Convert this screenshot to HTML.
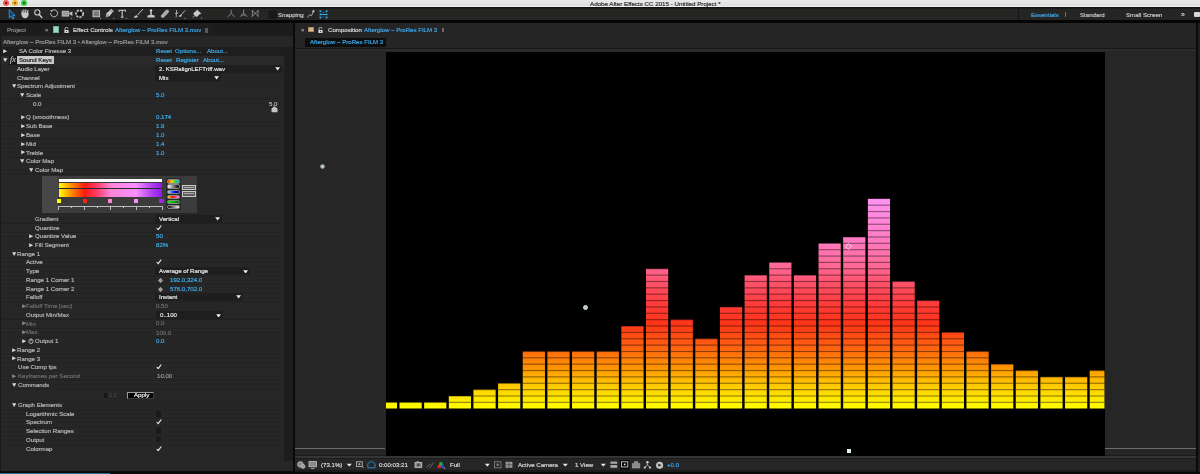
<!DOCTYPE html>
<html><head><meta charset="utf-8"><style>
html,body{margin:0;padding:0;}
body{width:1200px;height:474px;overflow:hidden;background:#1b1b1b;position:relative;font-family:"Liberation Sans", sans-serif;}
#r>div{position:absolute;}
.t{white-space:nowrap;-webkit-font-smoothing:antialiased;will-change:transform;-webkit-text-stroke:0.18px currentColor;}
svg{position:absolute;}
</style></head><body><div id="r">
<div style="left:0px;top:0px;width:1200px;height:7.3px;background:linear-gradient(#e9eae8,#dcdcda);"></div>
<div style="left:0px;top:6.4px;width:1200px;height:0.8px;background:#eeeeee;"></div>
<div style="left:0px;top:7.3px;width:1200px;height:1.2px;background:#111111;"></div>
<div style="left:2.95px;top:0.35px;width:5.9px;height:5.9px;border-radius:50%;background:radial-gradient(circle,#8a1010 0,#8a1010 0.9px,#f25a55 1.4px)"></div>
<div style="left:12.25px;top:0.35px;width:5.9px;height:5.9px;border-radius:50%;background:radial-gradient(circle,#a06a00 0,#a06a00 0.9px,#f4b52a 1.4px)"></div>
<div style="left:21.35px;top:0.35px;width:5.9px;height:5.9px;border-radius:50%;background:radial-gradient(circle,#107a18 0,#107a18 0.9px,#35c845 1.4px)"></div>
<div class="t" style="left:590px;top:0.71px;font-size:6.2px;line-height:6.2px;color:#2e2e2e;font-weight:normal;">Adobe After Effects CC 2015 - Untitled Project *</div>
<div style="left:0px;top:8.5px;width:1200px;height:11.8px;background:#252624;"></div>
<div style="left:0px;top:20.3px;width:1200px;height:2.4px;background:#050505;"></div>
<div style="left:0px;top:22.7px;width:292.8px;height:13.3px;background:#1c1c1c;"></div>
<div style="left:40.5px;top:22.7px;width:173.5px;height:13.3px;background:#1e1e1e;"></div>
<div class="t" style="left:6.8px;top:26.76px;font-size:6.1px;line-height:6.1px;color:#8c8c8c;font-weight:normal;">Project</div>
<div class="t" style="left:45px;top:26.81px;font-size:6px;line-height:6px;color:#8a8a8a;font-weight:normal;">×</div>
<div style="left:52.7px;top:26px;width:6px;height:6.5px;background:#9fd8c8;border:0.5px solid #6fb0a0;box-sizing:border-box"></div>
<svg style="left:63.5px;top:26.5px" width="5" height="6.5" viewBox="0 0 5 6.5"><path d="M1 3 V1.8 A1.5 1.5 0 0 1 4 1.8" stroke="#d8d8d8" stroke-width="0.8" fill="none"/><rect x="0.4" y="3" width="4.2" height="3.2" fill="#d8d8d8"/><rect x="2.1" y="4" width="0.8" height="1.2" fill="#222"/></svg>
<div class="t" style="left:73px;top:26.76px;font-size:6.1px;line-height:6.1px;color:#dcdcdc;font-weight:normal;">Effect Controls</div>
<div class="t" style="left:114.5px;top:26.76px;font-size:6.1px;line-height:6.1px;color:#3aa8ec;font-weight:normal;">Afterglow – ProRes FILM 3.mov</div>
<div style="left:205px;top:27.5px;width:3px;height:5px;background:#5a5a5a;"></div>
<div style="left:0px;top:36px;width:292.8px;height:434.5px;background:#262626;"></div>
<div style="left:0px;top:36px;width:1.2px;height:434.5px;background:#1a1a1a;"></div>
<div style="left:284.4px;top:47px;width:8.4px;height:414px;background:#1d1d1d;"></div>
<div style="left:292.8px;top:20px;width:2.4px;height:454px;background:#0a0a0a;"></div>
<div style="left:295.2px;top:22.7px;width:901px;height:25px;background:#252525;"></div>
<div style="left:295.2px;top:47.7px;width:901px;height:1.2px;background:#181818;"></div>
<div style="left:295.2px;top:48.9px;width:901px;height:406.6px;background:#262626;"></div>
<div style="left:295.2px;top:48.9px;width:901px;height:2.2px;background:#2b2b2b;"></div>
<div style="left:1196px;top:22.5px;width:2px;height:452px;background:#0a0a0a;"></div>
<div style="left:1198px;top:22.5px;width:2px;height:452px;background:#1e1e1e;"></div>
<div style="left:386px;top:52px;width:718.5px;height:403.5px;background:#000000;"></div>
<div style="left:295.2px;top:448.1px;width:89.8px;height:1.3px;background:#65706d;"></div>
<div style="left:1104.5px;top:448.1px;width:91.5px;height:1.3px;background:#65706d;"></div>
<div class="t" style="left:300.6px;top:27.01px;font-size:6px;line-height:6px;color:#9a9a9a;font-weight:normal;">×</div>
<div style="left:308.3px;top:27px;width:5.4px;height:5.2px;background:#d8b890;border:0.5px solid #a88860;box-sizing:border-box"></div>
<svg style="left:317.5px;top:26.7px" width="5" height="6.5" viewBox="0 0 5 6.5"><path d="M1 3 V1.8 A1.5 1.5 0 0 1 4 1.8" stroke="#d8d8d8" stroke-width="0.8" fill="none"/><rect x="0.4" y="3" width="4.2" height="3.2" fill="#d8d8d8"/><rect x="2.1" y="4" width="0.8" height="1.2" fill="#222"/></svg>
<div class="t" style="left:328px;top:27.26px;font-size:6.1px;line-height:6.1px;color:#dcdcdc;font-weight:normal;">Composition</div>
<div class="t" style="left:364px;top:27.26px;font-size:6.1px;line-height:6.1px;color:#3aa8ec;font-weight:normal;">Afterglow – ProRes FILM 3</div>
<div style="left:441.6px;top:28px;width:2.8px;height:4.2px;background:#6a6a6a;"></div>
<div style="left:304.7px;top:38px;width:81.3px;height:9px;background:#0e0e0e;"></div>
<div class="t" style="left:309.5px;top:39.26px;font-size:6.1px;line-height:6.1px;color:#3aa8ec;font-weight:normal;">Afterglow – ProRes FILM 3</div>
<div style="left:295.2px;top:455.5px;width:901px;height:2.3px;background:#353535;"></div>
<div style="left:295.2px;top:457.8px;width:901px;height:1px;background:#1c1c1c;"></div>
<div style="left:295.2px;top:458.8px;width:901px;height:11.7px;background:#262626;"></div>
<div style="left:295.2px;top:470.5px;width:901px;height:1.5px;background:#1a1a1a;"></div>
<div style="left:0px;top:472px;width:1200px;height:2px;background:#080808;"></div>
<div style="left:0px;top:470.5px;width:295.2px;height:1.5px;background:#0c0c0c;"></div>
<div style="left:0px;top:472.6px;width:110px;height:1.4px;background:#296c92;"></div>
<div style="left:1.2px;top:73.2px;width:280px;height:0.8px;background:#212121;"></div>
<div style="left:1.2px;top:74.0px;width:280px;height:0.5px;background:#292929;"></div>
<div style="left:1.2px;top:81.3px;width:280px;height:0.8px;background:#212121;"></div>
<div style="left:1.2px;top:82.1px;width:280px;height:0.5px;background:#292929;"></div>
<div style="left:1.2px;top:90.6px;width:280px;height:0.8px;background:#212121;"></div>
<div style="left:1.2px;top:91.39999999999999px;width:280px;height:0.5px;background:#292929;"></div>
<div style="left:1.2px;top:99.3px;width:280px;height:0.8px;background:#212121;"></div>
<div style="left:1.2px;top:100.1px;width:280px;height:0.5px;background:#292929;"></div>
<div style="left:1.2px;top:108.5px;width:280px;height:0.8px;background:#212121;"></div>
<div style="left:1.2px;top:109.3px;width:280px;height:0.5px;background:#292929;"></div>
<div style="left:1.2px;top:121.7px;width:280px;height:0.8px;background:#212121;"></div>
<div style="left:1.2px;top:122.5px;width:280px;height:0.5px;background:#292929;"></div>
<div style="left:1.2px;top:130.5px;width:280px;height:0.8px;background:#212121;"></div>
<div style="left:1.2px;top:131.3px;width:280px;height:0.5px;background:#292929;"></div>
<div style="left:1.2px;top:139.3px;width:280px;height:0.8px;background:#212121;"></div>
<div style="left:1.2px;top:140.10000000000002px;width:280px;height:0.5px;background:#292929;"></div>
<div style="left:1.2px;top:148px;width:280px;height:0.8px;background:#212121;"></div>
<div style="left:1.2px;top:148.8px;width:280px;height:0.5px;background:#292929;"></div>
<div style="left:1.2px;top:156.8px;width:280px;height:0.8px;background:#212121;"></div>
<div style="left:1.2px;top:157.60000000000002px;width:280px;height:0.5px;background:#292929;"></div>
<div style="left:1.2px;top:165.6px;width:280px;height:0.8px;background:#212121;"></div>
<div style="left:1.2px;top:166.4px;width:280px;height:0.5px;background:#292929;"></div>
<div style="left:1.2px;top:174.3px;width:280px;height:0.8px;background:#212121;"></div>
<div style="left:1.2px;top:175.10000000000002px;width:280px;height:0.5px;background:#292929;"></div>
<div style="left:1.2px;top:214.6px;width:280px;height:0.8px;background:#212121;"></div>
<div style="left:1.2px;top:215.4px;width:280px;height:0.5px;background:#292929;"></div>
<div style="left:1.2px;top:223.4px;width:280px;height:0.8px;background:#212121;"></div>
<div style="left:1.2px;top:224.20000000000002px;width:280px;height:0.5px;background:#292929;"></div>
<div style="left:1.2px;top:232.1px;width:280px;height:0.8px;background:#212121;"></div>
<div style="left:1.2px;top:232.9px;width:280px;height:0.5px;background:#292929;"></div>
<div style="left:1.2px;top:240.8px;width:280px;height:0.8px;background:#212121;"></div>
<div style="left:1.2px;top:241.60000000000002px;width:280px;height:0.5px;background:#292929;"></div>
<div style="left:1.2px;top:249.6px;width:280px;height:0.8px;background:#212121;"></div>
<div style="left:1.2px;top:250.4px;width:280px;height:0.5px;background:#292929;"></div>
<div style="left:1.2px;top:258.3px;width:280px;height:0.8px;background:#212121;"></div>
<div style="left:1.2px;top:259.1px;width:280px;height:0.5px;background:#292929;"></div>
<div style="left:1.2px;top:267px;width:280px;height:0.8px;background:#212121;"></div>
<div style="left:1.2px;top:267.8px;width:280px;height:0.5px;background:#292929;"></div>
<div style="left:1.2px;top:275.7px;width:280px;height:0.8px;background:#212121;"></div>
<div style="left:1.2px;top:276.5px;width:280px;height:0.5px;background:#292929;"></div>
<div style="left:1.2px;top:284.4px;width:280px;height:0.8px;background:#212121;"></div>
<div style="left:1.2px;top:285.2px;width:280px;height:0.5px;background:#292929;"></div>
<div style="left:1.2px;top:293.1px;width:280px;height:0.8px;background:#212121;"></div>
<div style="left:1.2px;top:293.90000000000003px;width:280px;height:0.5px;background:#292929;"></div>
<div style="left:1.2px;top:301.8px;width:280px;height:0.8px;background:#212121;"></div>
<div style="left:1.2px;top:302.6px;width:280px;height:0.5px;background:#292929;"></div>
<div style="left:1.2px;top:310.5px;width:280px;height:0.8px;background:#212121;"></div>
<div style="left:1.2px;top:311.3px;width:280px;height:0.5px;background:#292929;"></div>
<div style="left:1.2px;top:319.2px;width:280px;height:0.8px;background:#212121;"></div>
<div style="left:1.2px;top:320.0px;width:280px;height:0.5px;background:#292929;"></div>
<div style="left:1.2px;top:328px;width:280px;height:0.8px;background:#212121;"></div>
<div style="left:1.2px;top:328.8px;width:280px;height:0.5px;background:#292929;"></div>
<div style="left:1.2px;top:336.7px;width:280px;height:0.8px;background:#212121;"></div>
<div style="left:1.2px;top:337.5px;width:280px;height:0.5px;background:#292929;"></div>
<div style="left:1.2px;top:345.4px;width:280px;height:0.8px;background:#212121;"></div>
<div style="left:1.2px;top:346.2px;width:280px;height:0.5px;background:#292929;"></div>
<div style="left:1.2px;top:354.1px;width:280px;height:0.8px;background:#212121;"></div>
<div style="left:1.2px;top:354.90000000000003px;width:280px;height:0.5px;background:#292929;"></div>
<div style="left:1.2px;top:362.8px;width:280px;height:0.8px;background:#212121;"></div>
<div style="left:1.2px;top:363.6px;width:280px;height:0.5px;background:#292929;"></div>
<div style="left:1.2px;top:371.5px;width:280px;height:0.8px;background:#212121;"></div>
<div style="left:1.2px;top:372.3px;width:280px;height:0.5px;background:#292929;"></div>
<div style="left:1.2px;top:380.2px;width:280px;height:0.8px;background:#212121;"></div>
<div style="left:1.2px;top:381.0px;width:280px;height:0.5px;background:#292929;"></div>
<div style="left:1.2px;top:389px;width:280px;height:0.8px;background:#212121;"></div>
<div style="left:1.2px;top:389.8px;width:280px;height:0.5px;background:#292929;"></div>
<div style="left:1.2px;top:401px;width:280px;height:0.8px;background:#212121;"></div>
<div style="left:1.2px;top:401.8px;width:280px;height:0.5px;background:#292929;"></div>
<div style="left:1.2px;top:409.7px;width:280px;height:0.8px;background:#212121;"></div>
<div style="left:1.2px;top:410.5px;width:280px;height:0.5px;background:#292929;"></div>
<div style="left:1.2px;top:418.4px;width:280px;height:0.8px;background:#212121;"></div>
<div style="left:1.2px;top:419.2px;width:280px;height:0.5px;background:#292929;"></div>
<div style="left:1.2px;top:427.2px;width:280px;height:0.8px;background:#212121;"></div>
<div style="left:1.2px;top:428.0px;width:280px;height:0.5px;background:#292929;"></div>
<div style="left:1.2px;top:436px;width:280px;height:0.8px;background:#212121;"></div>
<div style="left:1.2px;top:436.8px;width:280px;height:0.5px;background:#292929;"></div>
<div style="left:1.2px;top:444.7px;width:280px;height:0.8px;background:#212121;"></div>
<div style="left:1.2px;top:445.5px;width:280px;height:0.5px;background:#292929;"></div>
<div class="t" style="left:3.2px;top:39.36px;font-size:6.1px;line-height:6.1px;color:#9a9a9a;font-weight:normal;">Afterglow – ProRes FILM 3 • Afterglow – ProRes FILM 3.mov</div>
<div style="left:1.2px;top:46.9px;width:283px;height:8.9px;background:#1e1e1e;"></div>
<svg style="left:3.2px;top:49.099999999999994px" width="4.5" height="4.4" viewBox="0 0 4.5 4.4"><path d="M0.2 0.2 L4.2 2.2 L0.2 4.2Z" fill="#e0e0e0"/></svg>
<div class="t" style="left:19px;top:48.36px;font-size:6.1px;line-height:6.1px;color:#bcbcbc;font-weight:normal;">SA Color Finesse 3</div>
<div class="t" style="left:155.5px;top:48.36px;font-size:6.1px;line-height:6.1px;color:#3eacee;font-weight:normal;">Reset</div>
<div class="t" style="left:175px;top:48.36px;font-size:6.1px;line-height:6.1px;color:#3eacee;font-weight:normal;">Options...</div>
<div class="t" style="left:207px;top:48.36px;font-size:6.1px;line-height:6.1px;color:#3eacee;font-weight:normal;">About...</div>
<div style="left:1.2px;top:56px;width:283px;height:8.5px;background:#2a2a2a;"></div>
<svg style="left:3.2px;top:58.1px" width="4.4" height="4" viewBox="0 0 4.4 4"><path d="M0.1 0.2 L4.3 0.2 L2.2 3.9Z" fill="#e0e0e0"/></svg>
<div style="left:9px;top:56px;width:8.4px;height:8.5px;background:#161616;"></div>
<div class="t" style="left:9.6px;top:56.15px;font-size:8.2px;line-height:8.2px;color:#d8d8d8;font-weight:normal;font-family:'Liberation Serif',serif;font-style:italic;-webkit-text-stroke:0.1px currentColor">fx</div>
<div style="left:17.4px;top:56px;width:37px;height:8px;background:#c9c9c9;"></div>
<div class="t" style="left:19px;top:57.26px;font-size:6.1px;line-height:6.1px;color:#1a1a1a;font-weight:normal;">Sound Keys</div>
<div class="t" style="left:155.5px;top:57.06px;font-size:6.1px;line-height:6.1px;color:#3eacee;font-weight:normal;">Reset</div>
<div class="t" style="left:175.5px;top:57.06px;font-size:6.1px;line-height:6.1px;color:#3eacee;font-weight:normal;">Register</div>
<div class="t" style="left:202.8px;top:57.06px;font-size:6.1px;line-height:6.1px;color:#3eacee;font-weight:normal;">About...</div>
<div class="t" style="left:17.4px;top:65.76px;font-size:6.1px;line-height:6.1px;color:#b8b8b8;font-weight:normal;">Audio Layer</div>
<div style="left:155px;top:64.9px;width:127px;height:8px;background:#1e1e1e;"></div>
<div class="t" style="left:158.6px;top:65.96px;font-size:6.1px;line-height:6.1px;color:#e8e8e8;font-weight:normal;">2. KSRalignLEFTriff.wav</div>
<svg style="left:274.9px;top:67.10000000000001px" width="5.2" height="3.8" viewBox="0 0 5.2 3.8"><path d="M0.2 0.3 L5 0.3 L2.6 3.6Z" fill="#f0f0f0"/></svg>
<div class="t" style="left:17.4px;top:74.56px;font-size:6.1px;line-height:6.1px;color:#b8b8b8;font-weight:normal;">Channel</div>
<div style="left:155px;top:73.6px;width:66px;height:8px;background:#1e1e1e;"></div>
<div class="t" style="left:158.6px;top:74.66px;font-size:6.1px;line-height:6.1px;color:#e8e8e8;font-weight:normal;">Mix</div>
<svg style="left:213.9px;top:75.8px" width="5.2" height="3.8" viewBox="0 0 5.2 3.8"><path d="M0.2 0.3 L5 0.3 L2.6 3.6Z" fill="#f0f0f0"/></svg>
<svg style="left:12px;top:84.39999999999999px" width="4.4" height="4" viewBox="0 0 4.4 4"><path d="M0.1 0.2 L4.3 0.2 L2.2 3.9Z" fill="#d8d8d8"/></svg>
<div class="t" style="left:17px;top:83.36px;font-size:6.1px;line-height:6.1px;color:#b8b8b8;font-weight:normal;">Spectrum Adjustment</div>
<svg style="left:20px;top:93.39999999999999px" width="4.4" height="4" viewBox="0 0 4.4 4"><path d="M0.1 0.2 L4.3 0.2 L2.2 3.9Z" fill="#d8d8d8"/></svg>
<div class="t" style="left:26px;top:92.36px;font-size:6.1px;line-height:6.1px;color:#b8b8b8;font-weight:normal;">Scale</div>
<div class="t" style="left:155.8px;top:92.36px;font-size:6.1px;line-height:6.1px;color:#3eacee;font-weight:normal;">5.0</div>
<div class="t" style="left:33px;top:100.76px;font-size:6.1px;line-height:6.1px;color:#b8b8b8;font-weight:normal;">0.0</div>
<div class="t" style="left:269px;top:100.76px;font-size:6.1px;line-height:6.1px;color:#b8b8b8;font-weight:normal;">5.0</div>
<svg style="left:270.5px;top:106px" width="7" height="6.5" viewBox="0 0 7 6.5"><path d="M3.5 0.3 L6.5 2.6 L6.5 6.3 L0.5 6.3 L0.5 2.6Z" fill="#c4c4c4"/></svg>
<svg style="left:20.5px;top:115.2px" width="4.5" height="4.4" viewBox="0 0 4.5 4.4"><path d="M0.2 0.2 L4.2 2.2 L0.2 4.2Z" fill="#d8d8d8"/></svg>
<div class="t" style="left:26px;top:114.46px;font-size:6.1px;line-height:6.1px;color:#b8b8b8;font-weight:normal;">Q (smoothness)</div>
<div class="t" style="left:155.8px;top:114.46px;font-size:6.1px;line-height:6.1px;color:#3eacee;font-weight:normal;">0.174</div>
<svg style="left:20.5px;top:124.1px" width="4.5" height="4.4" viewBox="0 0 4.5 4.4"><path d="M0.2 0.2 L4.2 2.2 L0.2 4.2Z" fill="#d8d8d8"/></svg>
<div class="t" style="left:26px;top:123.36px;font-size:6.1px;line-height:6.1px;color:#b8b8b8;font-weight:normal;">Sub Base</div>
<div class="t" style="left:155.8px;top:123.36px;font-size:6.1px;line-height:6.1px;color:#3eacee;font-weight:normal;">1.9</div>
<svg style="left:20.5px;top:133.0px" width="4.5" height="4.4" viewBox="0 0 4.5 4.4"><path d="M0.2 0.2 L4.2 2.2 L0.2 4.2Z" fill="#d8d8d8"/></svg>
<div class="t" style="left:26px;top:132.26px;font-size:6.1px;line-height:6.1px;color:#b8b8b8;font-weight:normal;">Base</div>
<div class="t" style="left:155.8px;top:132.26px;font-size:6.1px;line-height:6.1px;color:#3eacee;font-weight:normal;">1.0</div>
<svg style="left:20.5px;top:141.70000000000002px" width="4.5" height="4.4" viewBox="0 0 4.5 4.4"><path d="M0.2 0.2 L4.2 2.2 L0.2 4.2Z" fill="#d8d8d8"/></svg>
<div class="t" style="left:26px;top:140.96px;font-size:6.1px;line-height:6.1px;color:#b8b8b8;font-weight:normal;">Mid</div>
<div class="t" style="left:155.8px;top:140.96px;font-size:6.1px;line-height:6.1px;color:#3eacee;font-weight:normal;">1.4</div>
<svg style="left:20.5px;top:150.4px" width="4.5" height="4.4" viewBox="0 0 4.5 4.4"><path d="M0.2 0.2 L4.2 2.2 L0.2 4.2Z" fill="#d8d8d8"/></svg>
<div class="t" style="left:26px;top:149.66px;font-size:6.1px;line-height:6.1px;color:#b8b8b8;font-weight:normal;">Treble</div>
<div class="t" style="left:155.8px;top:149.66px;font-size:6.1px;line-height:6.1px;color:#3eacee;font-weight:normal;">1.0</div>
<svg style="left:20px;top:159.4px" width="4.4" height="4" viewBox="0 0 4.4 4"><path d="M0.1 0.2 L4.3 0.2 L2.2 3.9Z" fill="#d8d8d8"/></svg>
<div class="t" style="left:26px;top:158.36px;font-size:6.1px;line-height:6.1px;color:#b8b8b8;font-weight:normal;">Color Map</div>
<svg style="left:29px;top:168.1px" width="4.4" height="4" viewBox="0 0 4.4 4"><path d="M0.1 0.2 L4.3 0.2 L2.2 3.9Z" fill="#d8d8d8"/></svg>
<div class="t" style="left:35px;top:167.06px;font-size:6.1px;line-height:6.1px;color:#b8b8b8;font-weight:normal;">Color Map</div>
<div class="t" style="left:35px;top:216.06px;font-size:6.1px;line-height:6.1px;color:#b8b8b8;font-weight:normal;">Gradient</div>
<div style="left:155px;top:215px;width:67px;height:8px;background:#1e1e1e;"></div>
<div class="t" style="left:158.6px;top:216.06px;font-size:6.1px;line-height:6.1px;color:#e8e8e8;font-weight:normal;">Vertical</div>
<svg style="left:214.9px;top:217.2px" width="5.2" height="3.8" viewBox="0 0 5.2 3.8"><path d="M0.2 0.3 L5 0.3 L2.6 3.6Z" fill="#f0f0f0"/></svg>
<div class="t" style="left:35px;top:224.96px;font-size:6.1px;line-height:6.1px;color:#b8b8b8;font-weight:normal;">Quantize</div>
<svg style="left:155.6px;top:224.6px" width="6" height="5.5" viewBox="0 0 6 5.5"><path d="M0.8 3 L2.2 4.7 L5.3 0.5" stroke="#f0f0f0" stroke-width="1.1" fill="none"/></svg>
<svg style="left:29px;top:234.20000000000002px" width="4.5" height="4.4" viewBox="0 0 4.5 4.4"><path d="M0.2 0.2 L4.2 2.2 L0.2 4.2Z" fill="#d8d8d8"/></svg>
<div class="t" style="left:35px;top:233.46px;font-size:6.1px;line-height:6.1px;color:#b8b8b8;font-weight:normal;">Quantize Value</div>
<div class="t" style="left:155.5px;top:233.36px;font-size:6.1px;line-height:6.1px;color:#3eacee;font-weight:normal;">50</div>
<svg style="left:29px;top:243.10000000000002px" width="4.5" height="4.4" viewBox="0 0 4.5 4.4"><path d="M0.2 0.2 L4.2 2.2 L0.2 4.2Z" fill="#d8d8d8"/></svg>
<div class="t" style="left:35px;top:242.36px;font-size:6.1px;line-height:6.1px;color:#b8b8b8;font-weight:normal;">Fill Segment</div>
<div class="t" style="left:155.5px;top:242.26px;font-size:6.1px;line-height:6.1px;color:#3eacee;font-weight:normal;">82%</div>
<svg style="left:12px;top:251.9px" width="4.4" height="4" viewBox="0 0 4.4 4"><path d="M0.1 0.2 L4.3 0.2 L2.2 3.9Z" fill="#d8d8d8"/></svg>
<div class="t" style="left:17px;top:250.86px;font-size:6.1px;line-height:6.1px;color:#b8b8b8;font-weight:normal;">Range 1</div>
<div class="t" style="left:26px;top:259.36px;font-size:6.1px;line-height:6.1px;color:#b8b8b8;font-weight:normal;">Active</div>
<svg style="left:155.6px;top:259.2px" width="6" height="5.5" viewBox="0 0 6 5.5"><path d="M0.8 3 L2.2 4.7 L5.3 0.5" stroke="#f0f0f0" stroke-width="1.1" fill="none"/></svg>
<div class="t" style="left:26px;top:268.26px;font-size:6.1px;line-height:6.1px;color:#b8b8b8;font-weight:normal;">Type</div>
<div style="left:155px;top:267.3px;width:95px;height:8px;background:#1e1e1e;"></div>
<div class="t" style="left:158.6px;top:268.36px;font-size:6.1px;line-height:6.1px;color:#e8e8e8;font-weight:normal;">Average of Range</div>
<svg style="left:242.9px;top:269.5px" width="5.2" height="3.8" viewBox="0 0 5.2 3.8"><path d="M0.2 0.3 L5 0.3 L2.6 3.6Z" fill="#f0f0f0"/></svg>
<div class="t" style="left:26px;top:277.06px;font-size:6.1px;line-height:6.1px;color:#b8b8b8;font-weight:normal;">Range 1 Corner 1</div>
<svg style="left:158.0px;top:277.5px" width="5" height="5" viewBox="0 0 5 5"><path d="M2.5 0.3 L4.7 2.5 L2.5 4.7 L0.3 2.5Z" fill="#9a9a9a" stroke="#d0d0d0" stroke-width="0.5"/></svg>
<div class="t" style="left:170px;top:277.06px;font-size:6.1px;line-height:6.1px;color:#3eacee;font-weight:normal;">192.0,324.0</div>
<div class="t" style="left:26px;top:286.06px;font-size:6.1px;line-height:6.1px;color:#b8b8b8;font-weight:normal;">Range 1 Corner 2</div>
<svg style="left:158.0px;top:286.5px" width="5" height="5" viewBox="0 0 5 5"><path d="M2.5 0.3 L4.7 2.5 L2.5 4.7 L0.3 2.5Z" fill="#9a9a9a" stroke="#d0d0d0" stroke-width="0.5"/></svg>
<div class="t" style="left:170px;top:286.16px;font-size:6.1px;line-height:6.1px;color:#3eacee;font-weight:normal;">576.0,702.0</div>
<div class="t" style="left:26px;top:294.36px;font-size:6.1px;line-height:6.1px;color:#b8b8b8;font-weight:normal;">Falloff</div>
<div style="left:155px;top:293.2px;width:88px;height:8px;background:#1e1e1e;"></div>
<div class="t" style="left:158.6px;top:294.26px;font-size:6.1px;line-height:6.1px;color:#e8e8e8;font-weight:normal;">Instant</div>
<svg style="left:235.9px;top:295.4px" width="5.2" height="3.8" viewBox="0 0 5.2 3.8"><path d="M0.2 0.3 L5 0.3 L2.6 3.6Z" fill="#f0f0f0"/></svg>
<svg style="left:21.5px;top:303.90000000000003px" width="4.5" height="4.4" viewBox="0 0 4.5 4.4"><path d="M0.2 0.2 L4.2 2.2 L0.2 4.2Z" fill="#8a8a8a"/></svg>
<div class="t" style="left:26px;top:303.16px;font-size:6.1px;line-height:6.1px;color:#6e6e6e;font-weight:normal;">Falloff Time [sec]</div>
<div class="t" style="left:156px;top:303.26px;font-size:6.1px;line-height:6.1px;color:#6e6e6e;font-weight:normal;">0.50</div>
<div class="t" style="left:26px;top:312.06px;font-size:6.1px;line-height:6.1px;color:#b8b8b8;font-weight:normal;">Output Min/Max</div>
<div style="left:156px;top:311.3px;width:67px;height:8px;background:#1e1e1e;"></div>
<div class="t" style="left:159.6px;top:312.36px;font-size:6.1px;line-height:6.1px;color:#e8e8e8;font-weight:normal;">0..100</div>
<svg style="left:215.9px;top:313.5px" width="5.2" height="3.8" viewBox="0 0 5.2 3.8"><path d="M0.2 0.3 L5 0.3 L2.6 3.6Z" fill="#f0f0f0"/></svg>
<svg style="left:21.5px;top:321.3px" width="4.5" height="4.4" viewBox="0 0 4.5 4.4"><path d="M0.2 0.2 L4.2 2.2 L0.2 4.2Z" fill="#8a8a8a"/></svg>
<div class="t" style="left:26px;top:320.56px;font-size:6.1px;line-height:6.1px;color:#6e6e6e;font-weight:normal;">Min</div>
<div class="t" style="left:156px;top:320.36px;font-size:6.1px;line-height:6.1px;color:#6e6e6e;font-weight:normal;">0.0</div>
<svg style="left:21.5px;top:330.0px" width="4.5" height="4.4" viewBox="0 0 4.5 4.4"><path d="M0.2 0.2 L4.2 2.2 L0.2 4.2Z" fill="#8a8a8a"/></svg>
<div class="t" style="left:26px;top:329.26px;font-size:6.1px;line-height:6.1px;color:#6e6e6e;font-weight:normal;">Max</div>
<div class="t" style="left:156px;top:329.56px;font-size:6.1px;line-height:6.1px;color:#6e6e6e;font-weight:normal;">100.0</div>
<svg style="left:21.5px;top:338.8px" width="4.5" height="4.4" viewBox="0 0 4.5 4.4"><path d="M0.2 0.2 L4.2 2.2 L0.2 4.2Z" fill="#d8d8d8"/></svg>
<svg style="left:28px;top:338px" width="6" height="6" viewBox="0 0 6 6"><circle cx="3" cy="3.4" r="2.1" stroke="#d0d0d0" stroke-width="0.8" fill="none"/><path d="M3 1 V0.2 M3 3.4 L3 2" stroke="#d0d0d0" stroke-width="0.7"/></svg>
<div class="t" style="left:35px;top:338.06px;font-size:6.1px;line-height:6.1px;color:#b8b8b8;font-weight:normal;">Output 1</div>
<div class="t" style="left:156px;top:338.36px;font-size:6.1px;line-height:6.1px;color:#3eacee;font-weight:normal;">0.0</div>
<svg style="left:12px;top:347.8px" width="4.5" height="4.4" viewBox="0 0 4.5 4.4"><path d="M0.2 0.2 L4.2 2.2 L0.2 4.2Z" fill="#d8d8d8"/></svg>
<div class="t" style="left:17.4px;top:347.06px;font-size:6.1px;line-height:6.1px;color:#b8b8b8;font-weight:normal;">Range 2</div>
<svg style="left:12px;top:356.3px" width="4.5" height="4.4" viewBox="0 0 4.5 4.4"><path d="M0.2 0.2 L4.2 2.2 L0.2 4.2Z" fill="#d8d8d8"/></svg>
<div class="t" style="left:17.4px;top:355.56px;font-size:6.1px;line-height:6.1px;color:#b8b8b8;font-weight:normal;">Range 3</div>
<div class="t" style="left:17.5px;top:364.26px;font-size:6.1px;line-height:6.1px;color:#b8b8b8;font-weight:normal;">Use Comp fps</div>
<svg style="left:155.6px;top:363.9px" width="6" height="5.5" viewBox="0 0 6 5.5"><path d="M0.8 3 L2.2 4.7 L5.3 0.5" stroke="#f0f0f0" stroke-width="1.1" fill="none"/></svg>
<svg style="left:12px;top:373.8px" width="4.5" height="4.4" viewBox="0 0 4.5 4.4"><path d="M0.2 0.2 L4.2 2.2 L0.2 4.2Z" fill="#8a8a8a"/></svg>
<div class="t" style="left:17.5px;top:373.06px;font-size:6.1px;line-height:6.1px;color:#6e6e6e;font-weight:normal;">Keyframes per Second</div>
<div class="t" style="left:156.5px;top:372.86px;font-size:6.1px;line-height:6.1px;color:#9a9a9a;font-weight:normal;">10.00</div>
<svg style="left:12px;top:382.8px" width="4.4" height="4" viewBox="0 0 4.4 4"><path d="M0.1 0.2 L4.3 0.2 L2.2 3.9Z" fill="#d8d8d8"/></svg>
<div class="t" style="left:17.5px;top:381.76px;font-size:6.1px;line-height:6.1px;color:#b8b8b8;font-weight:normal;">Commands</div>
<div style="left:103.7px;top:393px;width:3.5px;height:4.5px;background:#161616;"></div>
<div class="t" style="left:109px;top:392.85px;font-size:5.5px;line-height:5.5px;color:#4a4a4a;font-weight:normal;">2 1</div>
<div style="left:127px;top:391.6px;width:27.3px;height:7.4px;background:#050505;border-left:0.7px solid #9a9a9a;border-top:0.7px solid #9a9a9a;border-right:0.5px solid #3a3a3a;border-bottom:0.5px solid #3a3a3a;box-sizing:border-box"></div>
<div class="t" style="left:133.5px;top:392.36px;font-size:6.1px;line-height:6.1px;color:#f4f4f4;font-weight:normal;">Apply</div>
<svg style="left:12px;top:403.40000000000003px" width="4.4" height="4" viewBox="0 0 4.4 4"><path d="M0.1 0.2 L4.3 0.2 L2.2 3.9Z" fill="#d8d8d8"/></svg>
<div class="t" style="left:17.5px;top:402.36px;font-size:6.1px;line-height:6.1px;color:#b8b8b8;font-weight:normal;">Graph Elements</div>
<div class="t" style="left:26px;top:411.26px;font-size:6.1px;line-height:6.1px;color:#b8b8b8;font-weight:normal;">Logarithmic Scale</div>
<div style="left:156px;top:411.4px;width:5.2px;height:5.2px;background:#1a1a1a;"></div>
<div class="t" style="left:26px;top:419.46px;font-size:6.1px;line-height:6.1px;color:#b8b8b8;font-weight:normal;">Spectrum</div>
<svg style="left:155.6px;top:419.4px" width="6" height="5.5" viewBox="0 0 6 5.5"><path d="M0.8 3 L2.2 4.7 L5.3 0.5" stroke="#f0f0f0" stroke-width="1.1" fill="none"/></svg>
<div class="t" style="left:26px;top:428.46px;font-size:6.1px;line-height:6.1px;color:#b8b8b8;font-weight:normal;">Selection Ranges</div>
<div style="left:156px;top:428.4px;width:5.2px;height:5.2px;background:#1a1a1a;"></div>
<div class="t" style="left:26px;top:437.06px;font-size:6.1px;line-height:6.1px;color:#b8b8b8;font-weight:normal;">Output</div>
<div style="left:156px;top:437.09999999999997px;width:5.2px;height:5.2px;background:#1a1a1a;"></div>
<div class="t" style="left:26px;top:445.56px;font-size:6.1px;line-height:6.1px;color:#b8b8b8;font-weight:normal;">Colormap</div>
<svg style="left:155.6px;top:445.5px" width="6" height="5.5" viewBox="0 0 6 5.5"><path d="M0.8 3 L2.2 4.7 L5.3 0.5" stroke="#f0f0f0" stroke-width="1.1" fill="none"/></svg>
<div style="left:42px;top:176px;width:155.3px;height:36.7px;background:#3b3b3b;"></div>
<div style="left:42px;top:176px;width:16px;height:36.7px;background:#474747;"></div>
<div style="left:58.7px;top:179.3px;width:103.3px;height:2.9px;background:#ffffff;"></div>
<div style="left:58.7px;top:183px;width:103.3px;height:5px;background:linear-gradient(90deg,#ffff00 0%,#ff8c00 12%,#ff1a10 25%,#ff3d6a 37%,#ff84d6 50%,#f890ff 75%,#b040f0 90%,#9018e8 100%);"></div>
<div style="left:58.7px;top:188px;width:103.3px;height:1.3px;background:#2a2a2a;"></div>
<div style="left:58.7px;top:189.3px;width:103.3px;height:7.4px;background:linear-gradient(90deg,#ffff00 0%,#ff8c00 12%,#ff1a10 25%,#ff3d6a 37%,#ff84d6 50%,#f890ff 75%,#b040f0 90%,#9018e8 100%);"></div>
<div style="left:56.6px;top:198.6px;width:4.2px;height:4.2px;background:#ffff00;"></div>
<div style="left:82.60000000000001px;top:198.6px;width:4.2px;height:4.2px;background:#ff2010;"></div>
<div style="left:107.9px;top:198.6px;width:4.2px;height:4.2px;background:#ff84d6;"></div>
<div style="left:133.9px;top:198.6px;width:4.2px;height:4.2px;background:#f890ff;"></div>
<div style="left:159.4px;top:198.6px;width:4.2px;height:4.2px;background:#9a2ae8;"></div>
<div style="left:58.7px;top:205.6px;width:103.3px;height:0.8px;background:#bdbdbd;"></div>
<div style="left:58.35px;top:206px;width:0.7px;height:3.5px;background:#bdbdbd;"></div>
<div style="left:71.2625px;top:206px;width:0.7px;height:1.8px;background:#bdbdbd;"></div>
<div style="left:84.17500000000001px;top:206px;width:0.7px;height:3.5px;background:#bdbdbd;"></div>
<div style="left:97.0875px;top:206px;width:0.7px;height:1.8px;background:#bdbdbd;"></div>
<div style="left:110.0px;top:206px;width:0.7px;height:3.5px;background:#bdbdbd;"></div>
<div style="left:122.91250000000001px;top:206px;width:0.7px;height:1.8px;background:#bdbdbd;"></div>
<div style="left:135.82500000000002px;top:206px;width:0.7px;height:3.5px;background:#bdbdbd;"></div>
<div style="left:148.7375px;top:206px;width:0.7px;height:1.8px;background:#bdbdbd;"></div>
<div style="left:161.65px;top:206px;width:0.7px;height:3.5px;background:#bdbdbd;"></div>
<div style="left:165.5px;top:178px;width:15.5px;height:32px;background:#2a2a2a;"></div>
<div style="left:166.5px;top:179.3px;width:13.5px;height:4.3px;background:linear-gradient(90deg,#ff3000,#ffd000,#30e030,#20a0ff);border-radius:2px;border:0.5px solid #888;box-sizing:border-box"></div>
<div style="left:166.5px;top:184.4px;width:13.5px;height:4.3px;background:linear-gradient(90deg,#ffffff,#000000);border-radius:2px;border:0.5px solid #888;box-sizing:border-box"></div>
<div style="left:166.5px;top:189.5px;width:13.5px;height:4.3px;background:linear-gradient(90deg,#9ff,#00f 60%,#008);border-radius:2px;border:0.5px solid #888;box-sizing:border-box"></div>
<div style="left:166.5px;top:194.60000000000002px;width:13.5px;height:4.3px;background:linear-gradient(90deg,#ff0,#f00 40%,#f8f);border-radius:2px;border:0.5px solid #888;box-sizing:border-box"></div>
<div style="left:166.5px;top:199.70000000000002px;width:13.5px;height:4.3px;background:linear-gradient(90deg,#0f0,#060);border-radius:2px;border:0.5px solid #888;box-sizing:border-box"></div>
<div style="left:166.5px;top:204.8px;width:13.5px;height:4.3px;background:linear-gradient(90deg,#000,#fff);border-radius:2px;border:0.5px solid #888;box-sizing:border-box"></div>
<div style="left:182px;top:184.7px;width:14px;height:5.6px;background:#5e5e5e;border:0.5px solid #c8c8c8;box-sizing:border-box"></div>
<div style="left:182px;top:191px;width:14px;height:5.6px;background:#5e5e5e;border:0.5px solid #c8c8c8;box-sizing:border-box"></div>
<div style="left:184px;top:186.8px;width:10px;height:1.4px;background:#a8a8a8;"></div>
<div style="left:184px;top:193.1px;width:10px;height:1.4px;background:#a8a8a8;"></div>
<svg style="left:386px;top:52px" width="718.5" height="403.5" viewBox="0 0 718.5 403.5">
<defs><linearGradient id="g" gradientUnits="userSpaceOnUse" x1="0" y1="356.7" x2="0" y2="0">
<stop offset="0" stop-color="#ffff00"/><stop offset="0.0216" stop-color="#ffee00"/><stop offset="0.0749" stop-color="#ffc000"/><stop offset="0.1197" stop-color="#ff9000"/><stop offset="0.173" stop-color="#ff6010"/><stop offset="0.24" stop-color="#ff3418"/><stop offset="0.291" stop-color="#ff3a38"/><stop offset="0.336" stop-color="#ff4a5c"/><stop offset="0.403" stop-color="#ff6a98"/><stop offset="0.467" stop-color="#ff7ac0"/><stop offset="0.535" stop-color="#ff88dc"/><stop offset="0.588" stop-color="#ff92f0"/><stop offset="1" stop-color="#c070ff"/></linearGradient>
<clipPath id="c"><rect x="0.00" y="350.34" width="11.05" height="6.36" fill="url(#g)"/><rect x="13.50" y="350.34" width="22.20" height="6.36" fill="url(#g)"/><rect x="38.15" y="350.34" width="22.20" height="6.36" fill="url(#g)"/><rect x="62.80" y="343.98" width="22.20" height="12.72" fill="url(#g)"/><rect x="87.45" y="337.62" width="22.20" height="19.08" fill="url(#g)"/><rect x="112.10" y="331.26" width="22.20" height="25.44" fill="url(#g)"/><rect x="136.75" y="299.46" width="22.20" height="57.24" fill="url(#g)"/><rect x="161.40" y="299.46" width="22.20" height="57.24" fill="url(#g)"/><rect x="186.05" y="299.46" width="22.20" height="57.24" fill="url(#g)"/><rect x="210.70" y="299.46" width="22.20" height="57.24" fill="url(#g)"/><rect x="235.35" y="274.02" width="22.20" height="82.68" fill="url(#g)"/><rect x="260.00" y="216.78" width="22.20" height="139.92" fill="url(#g)"/><rect x="284.65" y="267.66" width="22.20" height="89.04" fill="url(#g)"/><rect x="309.30" y="286.74" width="22.20" height="69.96" fill="url(#g)"/><rect x="333.95" y="254.94" width="22.20" height="101.76" fill="url(#g)"/><rect x="358.60" y="223.14" width="22.20" height="133.56" fill="url(#g)"/><rect x="383.25" y="210.42" width="22.20" height="146.28" fill="url(#g)"/><rect x="407.90" y="223.14" width="22.20" height="133.56" fill="url(#g)"/><rect x="432.55" y="191.34" width="22.20" height="165.36" fill="url(#g)"/><rect x="457.20" y="184.98" width="22.20" height="171.72" fill="url(#g)"/><rect x="481.85" y="146.82" width="22.20" height="209.88" fill="url(#g)"/><rect x="506.50" y="229.50" width="22.20" height="127.20" fill="url(#g)"/><rect x="531.15" y="248.58" width="22.20" height="108.12" fill="url(#g)"/><rect x="555.80" y="280.38" width="22.20" height="76.32" fill="url(#g)"/><rect x="580.45" y="299.46" width="22.20" height="57.24" fill="url(#g)"/><rect x="605.10" y="312.18" width="22.20" height="44.52" fill="url(#g)"/><rect x="629.75" y="318.54" width="22.20" height="38.16" fill="url(#g)"/><rect x="654.40" y="324.90" width="22.20" height="31.80" fill="url(#g)"/><rect x="679.05" y="324.90" width="22.20" height="31.80" fill="url(#g)"/><rect x="703.70" y="318.54" width="14.80" height="38.16" fill="url(#g)"/></clipPath></defs>
<rect x="0.00" y="350.34" width="11.05" height="6.36" fill="url(#g)"/><rect x="13.50" y="350.34" width="22.20" height="6.36" fill="url(#g)"/><rect x="38.15" y="350.34" width="22.20" height="6.36" fill="url(#g)"/><rect x="62.80" y="343.98" width="22.20" height="12.72" fill="url(#g)"/><rect x="87.45" y="337.62" width="22.20" height="19.08" fill="url(#g)"/><rect x="112.10" y="331.26" width="22.20" height="25.44" fill="url(#g)"/><rect x="136.75" y="299.46" width="22.20" height="57.24" fill="url(#g)"/><rect x="161.40" y="299.46" width="22.20" height="57.24" fill="url(#g)"/><rect x="186.05" y="299.46" width="22.20" height="57.24" fill="url(#g)"/><rect x="210.70" y="299.46" width="22.20" height="57.24" fill="url(#g)"/><rect x="235.35" y="274.02" width="22.20" height="82.68" fill="url(#g)"/><rect x="260.00" y="216.78" width="22.20" height="139.92" fill="url(#g)"/><rect x="284.65" y="267.66" width="22.20" height="89.04" fill="url(#g)"/><rect x="309.30" y="286.74" width="22.20" height="69.96" fill="url(#g)"/><rect x="333.95" y="254.94" width="22.20" height="101.76" fill="url(#g)"/><rect x="358.60" y="223.14" width="22.20" height="133.56" fill="url(#g)"/><rect x="383.25" y="210.42" width="22.20" height="146.28" fill="url(#g)"/><rect x="407.90" y="223.14" width="22.20" height="133.56" fill="url(#g)"/><rect x="432.55" y="191.34" width="22.20" height="165.36" fill="url(#g)"/><rect x="457.20" y="184.98" width="22.20" height="171.72" fill="url(#g)"/><rect x="481.85" y="146.82" width="22.20" height="209.88" fill="url(#g)"/><rect x="506.50" y="229.50" width="22.20" height="127.20" fill="url(#g)"/><rect x="531.15" y="248.58" width="22.20" height="108.12" fill="url(#g)"/><rect x="555.80" y="280.38" width="22.20" height="76.32" fill="url(#g)"/><rect x="580.45" y="299.46" width="22.20" height="57.24" fill="url(#g)"/><rect x="605.10" y="312.18" width="22.20" height="44.52" fill="url(#g)"/><rect x="629.75" y="318.54" width="22.20" height="38.16" fill="url(#g)"/><rect x="654.40" y="324.90" width="22.20" height="31.80" fill="url(#g)"/><rect x="679.05" y="324.90" width="22.20" height="31.80" fill="url(#g)"/><rect x="703.70" y="318.54" width="14.80" height="38.16" fill="url(#g)"/>
<g clip-path="url(#c)"><rect x="0" y="356.10" width="719" height="1.2" fill="#000" fill-opacity="0.42"/><rect x="0" y="349.74" width="719" height="1.2" fill="#000" fill-opacity="0.42"/><rect x="0" y="343.38" width="719" height="1.2" fill="#000" fill-opacity="0.42"/><rect x="0" y="337.02" width="719" height="1.2" fill="#000" fill-opacity="0.42"/><rect x="0" y="330.66" width="719" height="1.2" fill="#000" fill-opacity="0.42"/><rect x="0" y="324.30" width="719" height="1.2" fill="#000" fill-opacity="0.42"/><rect x="0" y="317.94" width="719" height="1.2" fill="#000" fill-opacity="0.42"/><rect x="0" y="311.58" width="719" height="1.2" fill="#000" fill-opacity="0.42"/><rect x="0" y="305.22" width="719" height="1.2" fill="#000" fill-opacity="0.42"/><rect x="0" y="298.86" width="719" height="1.2" fill="#000" fill-opacity="0.42"/><rect x="0" y="292.50" width="719" height="1.2" fill="#000" fill-opacity="0.42"/><rect x="0" y="286.14" width="719" height="1.2" fill="#000" fill-opacity="0.42"/><rect x="0" y="279.78" width="719" height="1.2" fill="#000" fill-opacity="0.42"/><rect x="0" y="273.42" width="719" height="1.2" fill="#000" fill-opacity="0.42"/><rect x="0" y="267.06" width="719" height="1.2" fill="#000" fill-opacity="0.42"/><rect x="0" y="260.70" width="719" height="1.2" fill="#000" fill-opacity="0.42"/><rect x="0" y="254.34" width="719" height="1.2" fill="#000" fill-opacity="0.42"/><rect x="0" y="247.98" width="719" height="1.2" fill="#000" fill-opacity="0.42"/><rect x="0" y="241.62" width="719" height="1.2" fill="#000" fill-opacity="0.42"/><rect x="0" y="235.26" width="719" height="1.2" fill="#000" fill-opacity="0.42"/><rect x="0" y="228.90" width="719" height="1.2" fill="#000" fill-opacity="0.42"/><rect x="0" y="222.54" width="719" height="1.2" fill="#000" fill-opacity="0.42"/><rect x="0" y="216.18" width="719" height="1.2" fill="#000" fill-opacity="0.42"/><rect x="0" y="209.82" width="719" height="1.2" fill="#000" fill-opacity="0.42"/><rect x="0" y="203.46" width="719" height="1.2" fill="#000" fill-opacity="0.42"/><rect x="0" y="197.10" width="719" height="1.2" fill="#000" fill-opacity="0.42"/><rect x="0" y="190.74" width="719" height="1.2" fill="#000" fill-opacity="0.42"/><rect x="0" y="184.38" width="719" height="1.2" fill="#000" fill-opacity="0.42"/><rect x="0" y="178.02" width="719" height="1.2" fill="#000" fill-opacity="0.42"/><rect x="0" y="171.66" width="719" height="1.2" fill="#000" fill-opacity="0.42"/><rect x="0" y="165.30" width="719" height="1.2" fill="#000" fill-opacity="0.42"/><rect x="0" y="158.94" width="719" height="1.2" fill="#000" fill-opacity="0.42"/><rect x="0" y="152.58" width="719" height="1.2" fill="#000" fill-opacity="0.42"/></g>
</svg>
<div style="left:320px;top:163.5px;width:5px;height:5px;background:#c8d0cc;border-radius:50%;border:0.6px solid #7a8a86;box-sizing:border-box"></div>
<div style="left:582.6px;top:305px;width:5px;height:5px;background:#a8c8c0;border-radius:50%;border:0.6px solid #ddd;box-sizing:border-box"></div>
<div style="left:846.5px;top:448.5px;width:4px;height:4px;background:#e0f0f0;"></div>
<svg style="left:845px;top:243px" width="7" height="7" viewBox="0 0 7 7"><path d="M3.5 0.5 L6.5 3.5 L3.5 6.5 L0.5 3.5Z" fill="none" stroke="#e8e8f0" stroke-width="0.9"/></svg>
<svg style="left:0px;top:8px" width="340" height="12" viewBox="0 0 340 12">
<g fill="none" stroke="#c8c8c8" stroke-width="1">
<path d="M9.2 1.8 L9.4 10 L11.3 8.3 L12.8 11 L14 10.4 L12.6 7.7 L15.2 7.6Z" fill="#123d60" stroke="#2a9ae0" stroke-width="0.9"/>
<path d="M22.5 5 L22 3 M24 4.6 L23.8 1.8 M25.7 4.6 L25.9 1.8 M27.4 5 L28 2.6" stroke-width="1.2" stroke-linecap="round"/>
<path d="M21.3 5.5 Q21.5 9.5 24.5 10.3 Q28.3 10.5 28.7 6 L28.5 4.8 L21.6 4.8Z" fill="#c8c8c8" stroke="none"/>
<circle cx="37.3" cy="4.4" r="2.6" stroke-width="1.1"/>
<path d="M39.2 6.4 L41.8 9.4" stroke-width="1.5" stroke-linecap="round"/>
<path d="M52.2 2.4 A3.5 3.5 0 1 1 50.6 5.2" stroke-width="0.9"/>
<path d="M50.2 2 L52.8 2.3 L51.6 4.2Z" fill="#c8c8c8" stroke="none"/>
<rect x="62.2" y="3.2" width="6.6" height="4.9" fill="#9a9a9a" stroke="#c8c8c8" stroke-width="0.8"/>
<path d="M68.8 5.6 L72.4 3.2 L72.4 8 Z" fill="#c8c8c8" stroke="none"/>
<circle cx="71.6" cy="10.2" r="0.5" fill="#c8c8c8" stroke="none"/>
<ellipse cx="79.6" cy="5.8" rx="3.6" ry="3.4" fill="none" stroke="#c8c8c8" stroke-width="1.7" stroke-dasharray="2.2 1.1"/><ellipse cx="79.6" cy="5.8" rx="1.7" ry="1.2" fill="#000" stroke="none"/>
<rect x="93" y="2.8" width="6.6" height="6" fill="#7a7a7a" stroke="#c8c8c8" stroke-width="0.9"/>
<circle cx="100.7" cy="10.2" r="0.5" fill="#c8c8c8" stroke="none"/>
<path d="M105.6 9.4 L106.6 5.2 L110.2 2 L112.6 4.2 L109.6 8 Z" fill="#c8c8c8" stroke="none"/>
<path d="M106 9 L108.6 6.2" stroke="#222" stroke-width="0.5"/>
<path d="M110.6 1.2 L113.4 3.8" stroke-width="1.2"/>
<circle cx="113.8" cy="10.2" r="0.5" fill="#c8c8c8" stroke="none"/>
<path d="M119 2.2 H125.4 V3.8 M119 3.8 V2.2 M122.2 2.2 V9.2 M120.8 9.2 H123.6" stroke-width="1.1"/>
<circle cx="126.6" cy="10.2" r="0.5" fill="#c8c8c8" stroke="none"/>
<path d="M143 1 L137.4 7.2" stroke-width="1"/>
<path d="M133.6 9.6 Q134.6 7.6 136.6 7.2 L138 8.4 Q136.8 10.2 133.6 9.6Z" fill="#c8c8c8" stroke="none"/>
<circle cx="151" cy="2.6" r="1.3" fill="#c8c8c8" stroke="none"/>
<rect x="150.3" y="3.4" width="1.5" height="3.4" fill="#c8c8c8" stroke="none"/>
<path d="M147.4 9.6 L147.6 7.4 Q151 6 154.6 7.4 L154.8 9.6Z" fill="#c8c8c8" stroke="none"/>
<path d="M161.2 7.8 L165.8 2.4 Q167.6 1.6 168.6 2.8 Q169 4 167.6 5.2 L163.4 9.4 Q161.8 9.8 161.2 8.6Z" fill="#aaa" stroke="#c8c8c8" stroke-width="0.6"/>
<path d="M176.6 2 L176.2 9.4 M175 5.6 L178.4 4.8" stroke-width="0.8"/>
<path d="M185.2 2.4 L180.6 7.4" stroke-width="0.9"/>
<path d="M178.6 8.6 Q179.4 7 181 6.8 L182 7.8 Q180.8 9.4 178.6 8.6Z" fill="#c8c8c8" stroke="none"/>
<circle cx="185" cy="10.2" r="0.5" fill="#c8c8c8" stroke="none"/>
<path d="M197 1.6 L201.4 5.8 L199.6 6.2 L197.4 8.6 L196.2 9 L193.2 6 L193.8 4.8 L196.4 2.8Z" fill="#c8c8c8" stroke="none"/>
<path d="M195 7.2 L192.8 9.6" stroke-width="0.8"/>
<circle cx="201.6" cy="10" r="0.5" fill="#c8c8c8" stroke="none"/>
<g stroke="#a8a8a8" stroke-width="0.7">
<path d="M231.2 1.6 V5.6 L227.6 8.8 M231.2 5.6 L234.8 8.8"/>
<path d="M243.6 1.6 V5.2 L240 8.8 M243.6 5.2 L247.2 8.8 M241.6 7 H245.6"/>
<path d="M251.8 2 L258.6 8.8 M258.6 2 L251.8 8.8 M252.4 2.6 V8.4 M258 2.6 V8.4"/>
</g>
</g>
<rect x="268.5" y="2.5" width="8.2" height="8.2" fill="#181818"/>
<g fill="none" stroke="#c8c8c8" stroke-width="0.8"><path d="M307.2 9.4 L310 6.6 L311.4 7.8 L313.6 3.4"/><circle cx="313.4" cy="3.2" r="0.8" fill="#c8c8c8"/></g>
<g fill="#3ab0e8" stroke="none"><circle cx="320.4" cy="3.2" r="1"/><circle cx="326.6" cy="3.2" r="1"/><circle cx="320.4" cy="9.6" r="1"/><circle cx="326.6" cy="9.6" r="1"/><circle cx="320.4" cy="6.4" r="0.9"/><circle cx="326.6" cy="6.4" r="0.9"/><rect x="321" y="5.9" width="5" height="1"/><rect x="322.6" y="3.6" width="1.8" height="1.4" fill="#1a5a88"/><rect x="322.6" y="7.8" width="1.8" height="1.4" fill="#1a5a88"/></g>
</svg>
<div class="t" style="left:277.5px;top:11.66px;font-size:6.1px;line-height:6.1px;color:#c8c8c8;font-weight:normal;">Snapping</div>
<div style="left:1018px;top:8px;width:0.8px;height:12px;background:#151515;"></div>
<div class="t" style="left:1030.8px;top:12.06px;font-size:6.1px;line-height:6.1px;color:#3aa8ec;font-weight:normal;">Essentials</div>
<div style="left:1064.5px;top:12.2px;width:1.6px;height:5px;background:#2f7fc0;"></div>
<div class="t" style="left:1080px;top:12.06px;font-size:6.1px;line-height:6.1px;color:#c8c8c8;font-weight:normal;">Standard</div>
<div class="t" style="left:1126px;top:12.06px;font-size:6.1px;line-height:6.1px;color:#c8c8c8;font-weight:normal;">Small Screen</div>
<div class="t" style="left:1180.5px;top:11.13px;font-size:7px;line-height:7px;color:#d0d0d0;font-weight:normal;">»</div>
<div style="left:1193.5px;top:11.8px;width:6.5px;height:5.5px;background:#d8d8d8;border-radius:1px"></div>
<svg style="left:296px;top:457px" width="400" height="14" viewBox="296 457 400 14">
<g fill="none" stroke="#c4c4c4" stroke-width="0.8">
<circle cx="300.4" cy="464.4" r="2.8" fill="#8a8a8a" stroke="#bbb"/>
<circle cx="303" cy="466.4" r="2" fill="#9a9a9a" stroke="#bbb"/>
<rect x="309" y="461.6" width="7.4" height="5.2" fill="#8a8a8a"/>
<path d="M311 468.6 H314.4"/>
<path d="M346.8 463.8 L351.8 463.8 L349.3 466.6Z" fill="#eee" stroke="none"/>
<rect x="356.4" y="461.8" width="5.8" height="4.8"/>
<path d="M359.3 463 V465.4 M358.1 464.2 H360.5 M362 466.4 L363.6 468"/>
<path d="M367.8 467.8 V463.6 L371.4 461.2 L375 463.6 V467.8 M367.8 467.8 H375" stroke="#2a9ae0"/>
<rect x="415" y="462.4" width="6.8" height="5" fill="#8a8a8a"/>
<rect x="416.6" y="461.4" width="2.4" height="1.2" fill="#bbb" stroke="none"/>
<circle cx="418.4" cy="464.9" r="1.3" fill="#444" stroke="none"/>
<path d="M426.6 467.6 L430.4 463.6 M429.4 468.2 L433.6 462.6" stroke="#777"/>
<circle cx="439.4" cy="466.4" r="1.9" fill="#e02020" stroke="none"/>
<circle cx="442.4" cy="466.4" r="1.9" fill="#2050e0" stroke="none" fill-opacity="0.9"/>
<circle cx="440.9" cy="463.8" r="1.9" fill="#20c040" stroke="none" fill-opacity="0.9"/>
<circle cx="444.4" cy="468.2" r="0.7" fill="#aaa" stroke="none"/>
<path d="M484.8 463.8 L489.8 463.8 L487.3 466.6Z" fill="#eee" stroke="none"/>
<rect x="494.4" y="461.8" width="6.6" height="6" stroke="#888"/>
<rect x="496.6" y="463.6" width="2.2" height="2.2" fill="#888" stroke="none"/>
<rect x="505.6" y="461.8" width="6.8" height="6" fill="#9a9a9a" stroke="none"/>
<path d="M505.6 464.8 H512.4 M509 461.8 V467.8" stroke="#333" stroke-width="0.6"/>
<path d="M562.8 463.8 L567.8 463.8 L565.3 466.6Z" fill="#eee" stroke="none"/>
<path d="M600.8 463.8 L605.8 463.8 L603.3 466.6Z" fill="#eee" stroke="none"/>
<rect x="610.4" y="461.6" width="6.8" height="2.2" fill="#aaa" stroke="none"/>
<rect x="610.4" y="465" width="6.8" height="2.8" fill="#aaa" stroke="none"/>
<rect x="620" y="460" width="9.4" height="9.6" fill="#080808" stroke="none"/>
<rect x="621.6" y="461.8" width="6.2" height="5.2" stroke="#ddd"/>
<circle cx="624.7" cy="464.4" r="0.9" fill="#ddd" stroke="none"/>
<path d="M632.4 468 V463.4 H634.6 V461.6 H637.6 V463.4 H639.8 V468Z" fill="#8a8a8a" stroke="#bbb" stroke-width="0.5"/>
<circle cx="647.4" cy="462.2" r="1.3" fill="#ccc" stroke="none"/>
<path d="M647.4 463.4 V465 M645 467 L647.4 465 L649.8 467"/>
<circle cx="644.8" cy="467.6" r="1.1" fill="#ccc" stroke="none"/>
<circle cx="650" cy="467.6" r="1.1" fill="#ccc" stroke="none"/>
<circle cx="659.6" cy="465.2" r="3.5" fill="#c8c8c8" stroke="none"/>
<path d="M658.2 463.6 L661.8 465.2 L658.2 466.8Z" fill="#333" stroke="none"/>
</g></svg>
<div class="t" style="left:321.3px;top:462.36px;font-size:6.1px;line-height:6.1px;color:#dcdcdc;font-weight:normal;">(73.1%)</div>
<div class="t" style="left:378.7px;top:462.36px;font-size:6.1px;line-height:6.1px;color:#dcdcdc;font-weight:normal;">0:00:03:21</div>
<div class="t" style="left:450px;top:462.36px;font-size:6.1px;line-height:6.1px;color:#dcdcdc;font-weight:normal;">Full</div>
<div class="t" style="left:518px;top:462.36px;font-size:6.1px;line-height:6.1px;color:#dcdcdc;font-weight:normal;">Active Camera</div>
<div class="t" style="left:575.3px;top:462.36px;font-size:6.1px;line-height:6.1px;color:#dcdcdc;font-weight:normal;">1 View</div>
<div class="t" style="left:666.7px;top:462.36px;font-size:6.1px;line-height:6.1px;color:#3aa8ec;font-weight:normal;">+0.0</div></div></body></html>
